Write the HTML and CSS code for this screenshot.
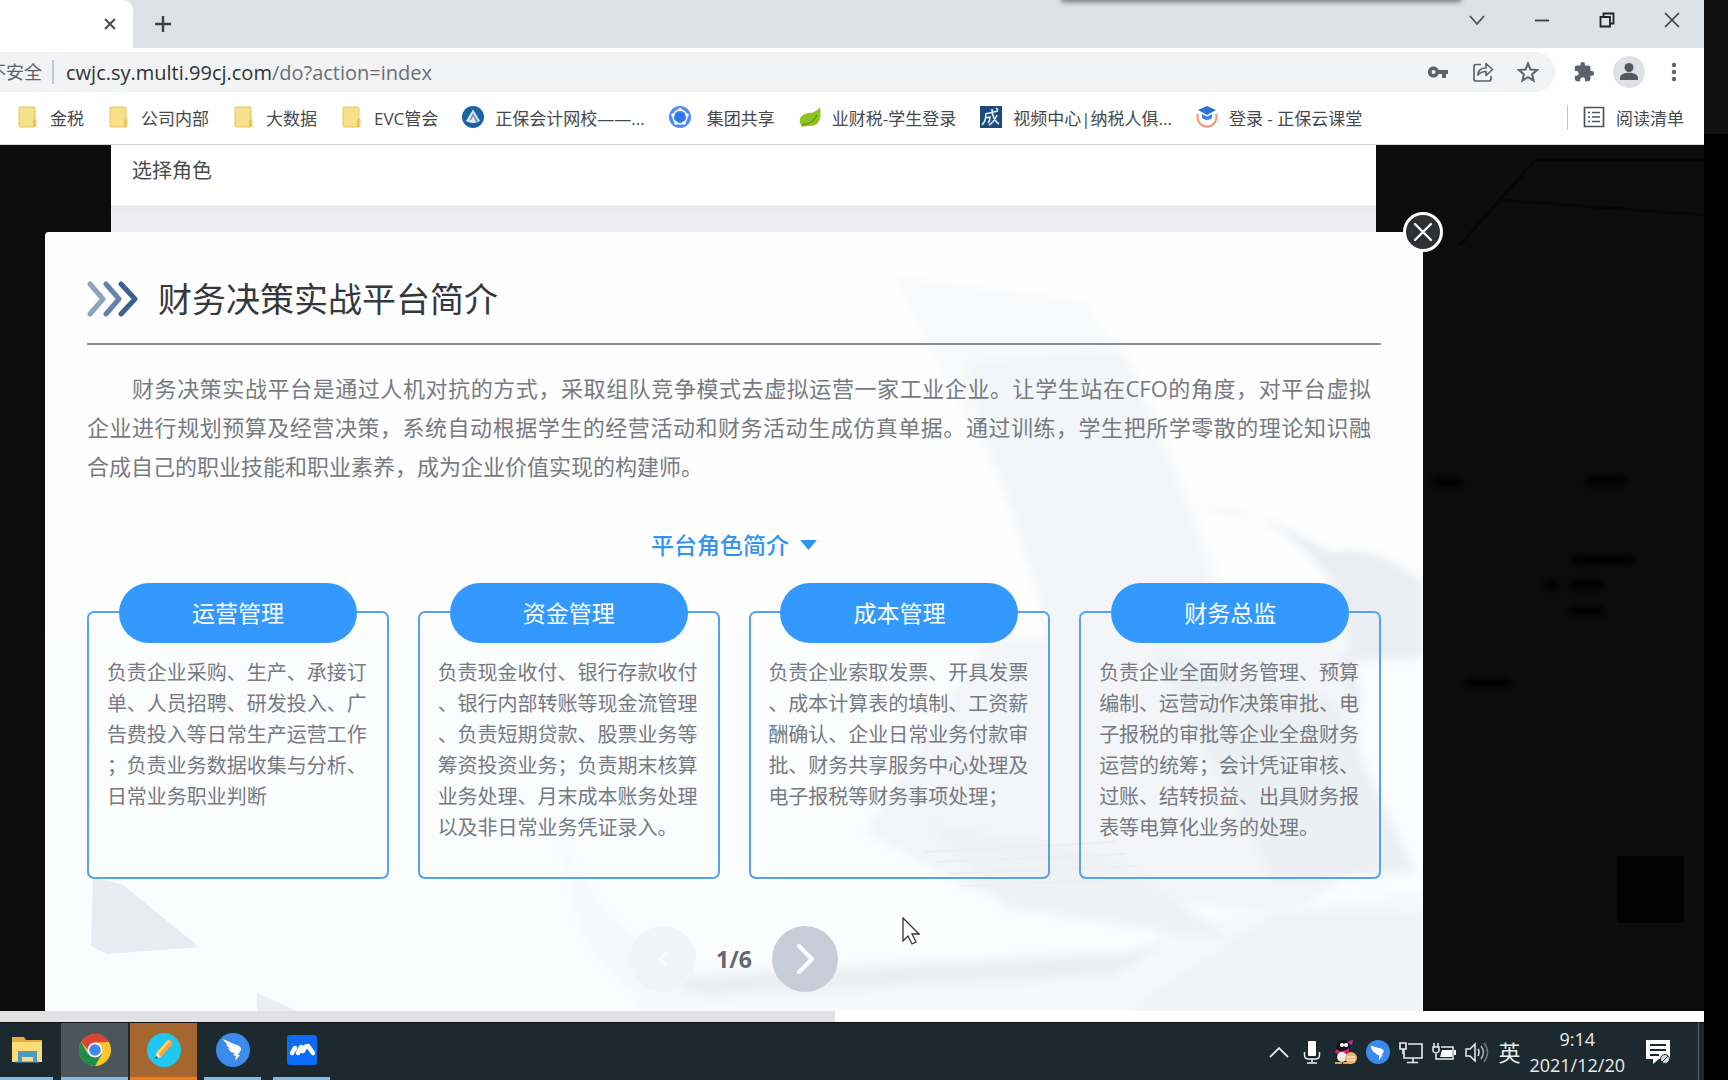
FILE: index.html
```html
<!DOCTYPE html>
<html lang="zh-CN">
<head>
<meta charset="utf-8">
<title>财务决策实战平台</title>
<link rel="stylesheet" href="styles.css">
</head>
<body>
<div class="desktop">
  <div class="browser">
    <header class="tabstrip">
      <div class="tab">
        <button class="icon-btn tab-close" aria-label="关闭标签页"><svg width="12" height="12" viewBox="0 0 12 12"><path d="M1 1l10 10M11 1L1 11" stroke="#45494d" stroke-width="2" fill="none"/></svg></button>
      </div>
      <button class="icon-btn new-tab" aria-label="新标签页"><svg width="18" height="18" viewBox="0 0 18 18"><path d="M9 1v16M1 9h16" stroke="#3c4043" stroke-width="2.400" fill="none"/></svg></button>
      <div class="window-controls">
        <button class="icon-btn" aria-label="搜索标签页"><svg width="16" height="16" viewBox="0 0 16 16"><path d="M1 4l7 8 7-8" stroke="#4a4d52" stroke-width="1.800" fill="none"/></svg></button>
        <button class="icon-btn" aria-label="最小化"><svg width="16" height="16" viewBox="0 0 16 16"><path d="M1 8.500h14" stroke="#3c4043" stroke-width="1.800"/></svg></button>
        <button class="icon-btn" aria-label="还原"><svg width="16" height="16" viewBox="0 0 16 16"><path d="M1.500 5h9.500v9.500H1.500zM4.500 5V1.500h10v10H11" stroke="#222" stroke-width="1.800" fill="none"/></svg></button>
        <button class="icon-btn" aria-label="关闭"><svg width="16" height="16" viewBox="0 0 16 16"><path d="M1 1l14 14M15 1L1 15" stroke="#3c4043" stroke-width="1.700"/></svg></button>
      </div>
    </header>

    <div class="toolbar">
      <div class="omnibox">
        <span class="security"><span>不安全</span></span>
        <label class="host" for="url">cwjc.sy.multi.99cj.com</label>
        <input class="path" id="url" type="text" value="/do?action=index">
        <button class="icon-btn" aria-label="密码"><svg width="22" height="22" viewBox="0 0 22 22"><path fill="#5f6368" fill-rule="evenodd" d="M6.500 5.500a5.500 5.500 0 0 1 5.100 3.500H21v4h-2v4h-4v-4h-3.400a5.500 5.500 0 1 1-5.100-7.500zm0 3.500a2 2 0 1 0 0 4 2 2 0 0 0 0-4z"/></svg></button>
        <button class="icon-btn" aria-label="分享"><svg width="22" height="22" viewBox="0 0 22 22" fill="none" stroke="#5f6368" stroke-width="1.700" stroke-linejoin="round"><path d="M9 3.500H4a2 2 0 0 0-2 2V18a2 2 0 0 0 2 2h13a2 2 0 0 0 2-2v-3"/><path d="M6 14c0-5 3-7 8-7V2.500l6.500 6L14 14.500v-4c-4 0-6 1-8 3.500z"/></svg></button>
        <button class="icon-btn" aria-label="收藏"><svg width="22" height="22" viewBox="0 0 22 22"><path d="M11 2.500l2.500 6 6.500.6-4.900 4.200 1.500 6.300L11 16.200l-5.600 3.400 1.500-6.300L2 9.100l6.500-.6z" fill="none" stroke="#5f6368" stroke-width="2"/></svg></button>
      </div>
      <button class="icon-btn" aria-label="扩展程序"><svg width="22" height="22" viewBox="0 0 24 24"><path fill="#5f6368" d="M20.500 11H19V7a2 2 0 0 0-2-2h-4V3.500a2.500 2.500 0 0 0-5 0V5H4a2 2 0 0 0-2 2v3.800h1.500a2.700 2.700 0 0 1 0 5.400H2V20a2 2 0 0 0 2 2h3.800v-1.500a2.700 2.700 0 0 1 5.400 0V22H17a2 2 0 0 0 2-2v-4h1.500a2.500 2.500 0 0 0 0-5z"/></svg></button>
      <button class="icon-btn" aria-label="用户"><svg width="32" height="32" viewBox="0 0 32 32"><circle cx="16" cy="16" r="16" fill="#dee1e8"/><circle cx="16" cy="11.500" r="4.500" fill="#54585f"/><path d="M7 24v-2c0-7 18-7 18 0v2z" fill="#54585f"/></svg></button>
      <button class="icon-btn menu" aria-label="更多"><svg width="6" height="20" viewBox="0 0 6 20" fill="#5f6368"><circle cx="3" cy="3" r="2.200"/><circle cx="3" cy="10" r="2.200"/><circle cx="3" cy="17" r="2.200"/></svg></button>
    </div>

    <nav class="bookmarks">
      <a class="bookmark" href="#"><svg class="ico" viewBox="0 0 22 22"><path d="M2 2q0-1 1-1h14q1 0 1 1v11l1 1v5q0 2-2 2H3q-1 0-1-1z" fill="#f6e08a" stroke="#e6c45c"/><path d="M16 14l2-1v8h-2z" fill="#e9bf57"/></svg><span>金税</span></a>
      <a class="bookmark" href="#"><svg class="ico" viewBox="0 0 22 22"><path d="M2 2q0-1 1-1h14q1 0 1 1v11l1 1v5q0 2-2 2H3q-1 0-1-1z" fill="#f6e08a" stroke="#e6c45c"/><path d="M16 14l2-1v8h-2z" fill="#e9bf57"/></svg><span>公司内部</span></a>
      <a class="bookmark" href="#"><svg class="ico" viewBox="0 0 22 22"><path d="M2 2q0-1 1-1h14q1 0 1 1v11l1 1v5q0 2-2 2H3q-1 0-1-1z" fill="#f6e08a" stroke="#e6c45c"/><path d="M16 14l2-1v8h-2z" fill="#e9bf57"/></svg><span>大数据</span></a>
      <a class="bookmark" href="#"><svg class="ico" viewBox="0 0 22 22"><path d="M2 2q0-1 1-1h14q1 0 1 1v11l1 1v5q0 2-2 2H3q-1 0-1-1z" fill="#f6e08a" stroke="#e6c45c"/><path d="M16 14l2-1v8h-2z" fill="#e9bf57"/></svg><span>EVC管会</span></a>
      <a class="bookmark" href="#"><svg class="ico" viewBox="0 0 22 22"><circle cx="11" cy="11" r="11" fill="#1b62a5"/><path d="M11 3.500L18 15q-7 4-14 0z" fill="#dfeaf4"/><path d="M11 7l-4 8 3-2 1-3 3 6 2-1z" fill="#6d97c4"/></svg><span>正保会计网校——...</span></a>
      <a class="bookmark roomy" href="#"><svg class="ico" viewBox="0 0 22 22"><circle cx="11" cy="11" r="11" fill="#4b8df0"/><circle cx="11" cy="11" r="7" fill="none" stroke="#fff" stroke-width="1.300"/><circle cx="11" cy="11" r="5" fill="#2f78ee"/><g fill="#fff"><circle cx="11" cy="3.500" r="1.800"/><circle cx="4" cy="9" r="1.800"/><circle cx="18" cy="9" r="1.800"/><circle cx="7" cy="17" r="1.800"/><circle cx="15" cy="17" r="1.800"/></g></svg><span>集团共享</span></a>
      <a class="bookmark" href="#"><svg class="ico" viewBox="0 0 22 22"><path d="M21 1c2 12-1 19-10 19-4 0-5 0-8 1C-2 13 2 8 10 7c5-.5 8-2 11-6z" fill="#8fc31f"/><path d="M3 19c7-1 12-3 15-10" stroke="#5e9b12" stroke-width="1.600" fill="none"/></svg><span>业财税-学生登录</span></a>
      <a class="bookmark" href="#"><svg class="ico" viewBox="0 0 22 22"><path d="M0 0h22v22H0z" fill="#1f4a7c"/><path d="M5 8l13-3M6 8q0 7-4 11M6 12l4-1q0 4-2 6M12 3q0 10 7 15M17 9q-3 7-8 10M16 2l2 2" stroke="#e5edf5" stroke-width="1.600" fill="none"/></svg><span>视频中心|纳税人俱...</span></a>
      <a class="bookmark" href="#"><svg class="ico" viewBox="0 0 22 22"><path d="M2 8a9.500 9.500 0 1 0 18 0" stroke="#f0997c" stroke-width="2.200" fill="none"/><path d="M11 0l9 4-9 5-9-5z" fill="#2f70d8"/><path d="M6 8l5 2.500L16 8v4q-5 4-10 0z" fill="#3f80e4"/></svg><span>登录 - 正保云课堂</span></a>
      <button class="reading-list"><svg width="22" height="22" viewBox="0 0 22 22" fill="none" stroke="#50545a" stroke-width="1.700"><path d="M1.500 1.500h19v19h-19z"/><path d="M5 6.500h2M9 6.500h8M5 11h2M9 11h8M5 15.500h2M9 15.500h8"/></svg><span>阅读清单</span></button>
    </nav>

    <main class="viewport">
      <svg class="backdrop" viewBox="0 0 1704 866" preserveAspectRatio="none" aria-hidden="true">
        <defs><filter id="dim"><feGaussianBlur stdDeviation="3"/></filter></defs>
        <path d="M1535 15L1460 100M1535 15H1704M1500 55L1704 70" stroke="#060607" stroke-width="3" fill="none"/>
        <rect x="1617" y="711" width="67" height="67" fill="#030303"/>
        <path filter="url(#dim)" d="M1570 415h66M1570 440h34M1570 466h34M1544 440h14M1466 538h44M1586 336h40M1432 337h30" stroke="#050505" stroke-width="9"/>
      </svg>
      <section class="role-page">
        <h2 class="role-title">选择角色</h2>
      </section>
      <section class="modal" role="dialog" aria-labelledby="intro-title">
        <svg class="modal-art" viewBox="0 0 1378 779" preserveAspectRatio="none" aria-hidden="true">
          <defs><filter id="soft" x="-10%" y="-10%" width="120%" height="120%"><feGaussianBlur stdDeviation="4"/></filter></defs>
          <rect x="0" y="400" width="1378" height="379" fill="#fafbfd" opacity=".7"/>
          <g filter="url(#soft)">
            <path d="M850 45L1040 70 1110 180 1170 330 1250 640 1020 400 950 240z" fill="#f8f9fb"/>
            <path d="M920 130L1080 120 1150 300 1190 470 1010 420z" fill="#f3f5f8"/>
            <path d="M1150 275q60 0 100 35 60 50 50 120l78-5v-75q-50-40-90-30l-60-30z" fill="#eaeef2"/>
            <path d="M1190 400q90-20 120 40 30 80-90 50z" fill="#e9edf2"/>
            <path d="M940 410L1290 400 1340 620 1250 680 930 660 820 600z" fill="#f3f5f8"/>
            <path d="M1110 420L1290 470 1370 640 1230 650z" fill="#eceff4"/>
            <path d="M510 600L560 680 640 760 1100 720 1120 690 1378 660V779H600L540 710z" fill="#f6f8fa"/>
            <path d="M880 590l180 30 130 90-230-35z" fill="#eff1f5"/>
            <path d="M1230 680h148v99h-300z" fill="#f1f3f7"/>
            <path d="M600 745l480-25 40-8-50 32-410 20z" fill="#eeeff4"/>
          </g>
          <path d="M48 645l30 8 76 62-92 7-16-8z" fill="#e8ebf1"/>
          <path d="M212 761l40 18h-40z" fill="#eceef4"/>
          <path d="M880 620l190-10M890 630l190-8M902 642l190-8M915 654l190-8" stroke="#eceef3" stroke-width="2"/>
        </svg>
        <button class="modal-close" aria-label="关闭弹窗"><svg width="20" height="20" viewBox="0 0 20 20"><path d="M2 2l16 16M18 2L2 18" stroke="#fff" stroke-width="2.200" stroke-linecap="round"/></svg></button>
        <header class="modal-head">
          <svg width="52" height="36" viewBox="0 0 52 36" fill="none" stroke-width="5" stroke-linecap="round" stroke-linejoin="round"><path d="M3 3l13 15L3 33" stroke="#8ba4c0"/><path d="M19 3l13 15-13 15" stroke="#6584ad"/><path d="M34 3l14 15-14 15" stroke="#3b618f"/></svg>
          <h1 id="intro-title">财务决策实战平台简介</h1>
        </header>
        <p class="intro">
          <span class="line first">财务决策实战平台是通过人机对抗的方式，采取组队竞争模式去虚拟运营一家工业企业。让学生站在CFO的角度，对平台虚拟</span>
          <span class="line">企业进行规划预算及经营决策，系统自动根据学生的经营活动和财务活动生成仿真单据。通过训练，学生把所学零散的理论知识融</span>
          <span class="line last">合成自己的职业技能和职业素养，成为企业价值实现的构建师。</span>
        </p>
        <button class="roles-toggle"><span>平台角色简介</span><svg width="17" height="10" viewBox="0 0 17 10"><path d="M0 0h17L8.500 10z" fill="#3393f0"/></svg></button>
        <div class="roles">
          <article class="role"><h3>运营管理</h3><p>负责企业采购、生产、承接订单、人员招聘、研发投入、广告费投入等日常生产运营工作；负责业务数据收集与分析、日常业务职业判断</p></article>
          <article class="role"><h3>资金管理</h3><p>负责现金收付、银行存款收付、银行内部转账等现金流管理、负责短期贷款、股票业务等筹资投资业务；负责期末核算业务处理、月末成本账务处理以及非日常业务凭证录入。</p></article>
          <article class="role"><h3>成本管理</h3><p>负责企业索取发票、开具发票、成本计算表的填制、工资薪酬确认、企业日常业务付款审批、财务共享服务中心处理及电子报税等财务事项处理；</p></article>
          <article class="role"><h3>财务总监</h3><p>负责企业全面财务管理、预算编制、运营动作决策审批、电子报税的审批等企业全盘财务运营的统筹；会计凭证审核、过账、结转损益、出具财务报表等电算化业务的处理。</p></article>
        </div>
        <div class="pager">
          <button class="page-btn prev" aria-label="上一页" disabled><svg width="20" height="32" viewBox="0 0 20 32"><path d="M14 9l-7 7 7 7" stroke="#fbfbfd" stroke-width="3" fill="none"/></svg></button>
          <span class="page-no">1/6</span>
          <button class="page-btn next" aria-label="下一页"><svg width="20" height="32" viewBox="0 0 20 32"><path d="M4 3l13 13L4 29" stroke="#fff" stroke-width="4" stroke-linecap="round" stroke-linejoin="round" fill="none"/></svg></button>
        </div>
      </section>
    </main>
    <div class="hscroll"><div class="thumb"></div></div>

    <footer class="taskbar">
      <div class="apps">
        <button class="app explorer" aria-label="文件资源管理器"><svg width="30" height="28" viewBox="0 0 30 28"><path d="M0 1h12l2 3h16v21H0z" fill="#e0b03a"/><path d="M0 6h30v20H0z" fill="#fbdc79"/><path d="M6 15h19v11h-4v-5H10v5H6z" fill="#4a9ac4"/><path d="M3 25h24v2H3z" fill="#4a9ac4" opacity=".5"/></svg></button>
        <button class="app active" aria-label="Chrome"><svg width="32" height="32" viewBox="0 0 32 32"><circle cx="16" cy="16" r="16" fill="#fbc72f"/><path d="M2.100 8A16 16 0 0 0 16 32l7-12-7-4-7 4z" fill="#1e8e4a"/><path d="M2.100 8A16 16 0 0 1 29.900 8L16 8.500 9 16z" fill="#db4437"/><circle cx="16" cy="16" r="7.500" fill="#fff"/><circle cx="16" cy="16" r="5.800" fill="#4285f4"/></svg></button>
        <button class="app alert" aria-label="画笔"><svg width="34" height="34" viewBox="0 0 34 34"><circle cx="17" cy="17" r="17" fill="#1ec8f0"/><path d="M8 26l2-7L21 7q3-1 5 3-1 2-2 3L14 24z" fill="#f6a63c"/><path d="M10 19L21 7l2 1-11 13z" fill="#fcd26e"/><path d="M8 26l2-7 4 5z" fill="#f5e3cb"/><path d="M8 26l1-3 2 2z" fill="#333"/></svg></button>
        <button class="app running" aria-label="钉钉"><svg width="34" height="34" viewBox="0 0 34 34"><circle cx="17" cy="17" r="17" fill="#3b8bea"/><path d="M7 6q8 4 14 6 5 2 4 5l-3 5h2l-5 6 1-5-3-1q1-1 2-2-5 0-7-5l4 1q-5-2-6-5l3 1Q8 9 7 6z" fill="#fff"/></svg></button>
        <button class="app running" aria-label="会议"><svg width="32" height="32" viewBox="0 0 32 32"><rect x="1" y="1" width="30" height="30" rx="3" fill="#0b6cf6"/><path d="M6 19l3-5M12 19l3-6M17 17l2-4 3-1 5 7" stroke="#fff" stroke-width="4.500" stroke-linecap="round" stroke-linejoin="round" fill="none"/></svg></button>
      </div>
      <div class="tray">
        <button class="icon-btn" aria-label="显示隐藏的图标"><svg width="24" height="24" viewBox="0 0 24 24"><path d="M3 17l9-9 9 9" stroke="#dfe4e6" stroke-width="1.800" fill="none"/></svg></button>
        <button class="icon-btn" aria-label="麦克风"><svg width="24" height="24" viewBox="0 0 24 24"><rect x="8" y="1" width="8" height="15" rx="1" fill="#fff"/><path d="M4.500 12v3q0 4 4 4h7q4 0 4-4v-3M12 19v4M7 23h10" stroke="#e8ecee" stroke-width="1.500" fill="none"/></svg></button>
        <button class="icon-btn" aria-label="QQ"><svg width="24" height="24" viewBox="0 0 24 24"><path d="M4 6q0-6 6-6t7 6v5l2 6-6 6H5l-2-6-1-5z" fill="#15131a"/><path d="M14 2l6-2-1 5z" fill="#d82a90"/><circle cx="9" cy="5" r="2" fill="#fff"/><circle cx="13" cy="5" r="2" fill="#fff"/><path d="M3 9q6 5 13-1v4q-6 4-14 1z" fill="#d81f80"/><ellipse cx="9" cy="17" rx="5" ry="5" fill="#f5eeee"/><path d="M2 22h7v2H2zM10 22h7v2h-7z" fill="#e9a52c"/><circle cx="18" cy="18" r="6" fill="#f0b06b"/><path d="M14 17h8M14 20h8" stroke="#fff" stroke-width="1"/></svg></button>
        <button class="icon-btn" aria-label="钉钉"><svg width="24" height="24" viewBox="0 0 34 34"><circle cx="17" cy="17" r="17" fill="#3b8bea"/><path d="M7 8q8 2 14 4 5 2 4 5l-3 4h2l-6 8 1-7-3-1-6-5q-3-4-3-8z" fill="#fff"/></svg></button>
        <button class="icon-btn" aria-label="网络"><svg width="24" height="24" viewBox="0 0 24 24" fill="none" stroke="#e8ecee" stroke-width="1.600"><path d="M9 4h14v14H5v-8M14 18v4M8 22.500h11"/><path d="M1 3h6v6H1zM4 9v5"/></svg></button>
        <button class="icon-btn" aria-label="电源"><svg width="24" height="24" viewBox="0 0 24 24"><path d="M2 3v4M6 3v4M1 7h6v4q-1 2-3 2t-3-2zM4 13v6h4M9 7h12v12H8" stroke="#e8ecee" stroke-width="1.500" fill="none"/><path d="M10 10h10v7H8zM22 10h2v5h-2z" fill="#fff"/></svg></button>
        <button class="icon-btn" aria-label="音量"><svg width="24" height="24" viewBox="0 0 24 24" fill="none" stroke="#e8ecee" stroke-width="1.500"><path d="M1 9h4l5-5v17l-5-5H1z"/><path d="M13 9q2 3 0 7"/><path d="M16 6q5 6 0 13" opacity=".7"/><path d="M19 3q7 9 0 19" opacity=".4"/></svg></button>
        <button class="ime">英</button>
        <div class="clock"><time>9:14</time><time>2021/12/20</time></div>
        <button class="icon-btn notice" aria-label="通知"><svg width="24" height="24" viewBox="0 0 24 24"><path d="M0 0h24v19H13l-6 5v-5H0z" fill="#fff"/><path d="M4 5h16M4 10h16M4 15h9" stroke="#1c2a2f" stroke-width="1.800"/><circle cx="19" cy="19" r="4.500" fill="#d7dcde" stroke="#1c2a2f"/><path d="M16 22l6-6" stroke="#1c2a2f"/></svg></button>
      </div>
    </footer>
  </div>
  <div class="side-strip"></div>
  <div class="top-bar-shadow"></div>
  <svg class="cursor" width="18" height="28" viewBox="0 0 18 28" aria-hidden="true"><path d="M1 1v23l5-5 4 8 4-2-4-8h7z" fill="#fff" stroke="#333" stroke-width="1.300"/></svg>
</div>
</body>
</html>
```

FILE: styles.css
```css
* { box-sizing: border-box; }

body {
  margin: 0;
  background: #000;
  font-family: "Open Sans", "Noto Sans CJK SC", sans-serif;
  color: #45484c;
}

button, input {
  font: inherit;
  color: inherit;
  border: 0;
  padding: 0;
  background: none;
}

a { color: inherit; text-decoration: none; }
h1, h2, h3, p { margin: 0; font-weight: 400; }
svg { display: block; flex: none; }

.desktop {
  position: relative;
  display: grid;
  grid-template-columns: minmax(0, 1fr) 24px;
  min-height: 100vh;
  overflow: hidden;
}

.side-strip { background: linear-gradient(#101010 134px, #000 134px); }

.browser {
  display: grid;
  grid-template-rows: 48px 48px 49px 1fr 12px 57px;
}

.icon-btn { display: flex; align-items: center; justify-content: center; }

/* Tab strip */
.tabstrip {
  display: flex;
  align-items: center;
  background: #dee1e6;
}

.tab {
  display: flex;
  align-items: center;
  justify-content: flex-end;
  width: 133px;
  height: 100%;
  padding-right: 17px;
  background: #fff;
  border-top-right-radius: 10px;
}

.new-tab { margin-left: 21px; }

.window-controls {
  display: flex;
  gap: 49px;
  margin-left: auto;
  padding: 0 24px 8px 0;
}

/* Address bar */
.toolbar {
  display: flex;
  align-items: center;
  gap: 18px;
  padding: 0 27px 0 0;
  background: #fff;
}

.omnibox {
  display: flex;
  flex: 1;
  align-items: center;
  gap: 23px;
  height: 40px;
  padding-right: 16px;
  background: #f1f3f4;
  border-radius: 0 20px 20px 0;
  font-size: 20px;
}

.security {
  display: flex;
  justify-content: flex-end;
  width: 54px;
  padding-right: 10px;
  overflow: hidden;
  border-right: 2px solid #c3c6ca;
  font-size: 18px;
  line-height: 24px;
  white-space: nowrap;
  color: #5f6368;
}

.host { margin-left: -11px; color: #2f3337; }
.path { flex: 1; min-width: 0; margin-left: -23px; color: #6b6f74; }
.menu { margin-left: 8px; }

/* Bookmarks */
.bookmarks {
  display: flex;
  align-items: center;
  gap: 24px;
  padding: 0 20px 6px 17px;
  background: #fff;
  border-bottom: 1px solid #d5d6d9;
  font-size: 17px;
  white-space: nowrap;
}

.bookmark { display: flex; align-items: center; gap: 11px; }
.bookmark.roomy { gap: 16px; }
.ico { width: 22px; height: 22px; }

.reading-list {
  display: flex;
  align-items: center;
  gap: 11px;
  margin-left: auto;
  padding-left: 15px;
  border-left: 1px solid #c3c6ca;
}

/* Page */
.viewport {
  display: grid;
  position: relative;
  min-height: 0;
  background: #0c0c0c;
}

.backdrop { position: absolute; width: 100%; height: 100%; }

.role-page, .modal { grid-area: 1 / 1; position: relative; }

.role-page {
  height: 87px;
  margin: 0 328px 0 111px;
  background: linear-gradient(#fff 60px, #e8e8eb 61px, #eeeef4 72px);
}

.role-title {
  padding: 10px 21px;
  font-size: 20px;
  line-height: 32px;
  color: #4a4a4a;
}

.modal {
  display: flex;
  flex-direction: column;
  margin: 87px 281px 0 45px;
  padding: 0 42px 18px;
  background: #fefefe;
  border-top-left-radius: 4px;
}

.modal-art {
  position: absolute;
  inset: 0;
  width: 100%;
  height: 100%;
}

.modal > :not(.modal-art, .modal-close) { position: relative; }

.modal-close {
  position: absolute;
  top: -20px;
  right: -20px;
  display: flex;
  align-items: center;
  justify-content: center;
  width: 40px;
  height: 40px;
  background: #2e3033;
  border: 3px solid #fff;
  border-radius: 50%;
}

.modal-head {
  display: flex;
  align-items: center;
  gap: 19px;
  height: 113px;
  padding-top: 22px;
  border-bottom: 2px solid #8b8f98;
}

.modal-head h1 { font-size: 34px; line-height: 48px; color: #35383d; }

.intro {
  padding-top: 24px;
  font-size: 22px;
  line-height: 39px;
  color: #777a81;
  text-spacing-trim: space-all;
}

.line {
  display: block;
  padding-right: 10px;
  text-align-last: justify;
  white-space: nowrap;
}

.line.first { padding-left: 45px; }
.line.last { text-align-last: left; }

.roles-toggle {
  display: flex;
  align-items: center;
  align-self: center;
  gap: 11px;
  margin-top: 43px;
  font-size: 23px;
  font-weight: 500;
  line-height: 32px;
  color: #3393f0;
}

.roles {
  display: grid;
  grid-template-columns: repeat(4, minmax(0, 1fr));
  gap: 29px;
  padding-top: 50px;
}

.role {
  display: flex;
  flex-direction: column;
  align-items: center;
  height: 268px;
  border: 2px solid #55a3ee;
  border-radius: 7px;
}

.role h3 {
  width: 80%;
  margin-top: -30px;
  background: #3399ff;
  border-radius: 30px;
  font-size: 23px;
  line-height: 60px;
  text-align: center;
  color: #fff;
}

.role p {
  width: 262px;
  margin-top: 14px;
  font-size: 20px;
  line-height: 31px;
  color: #777a81;
  line-break: anywhere;
  text-spacing-trim: space-all;
}

.pager {
  display: flex;
  align-items: center;
  align-self: center;
  gap: 18px;
  margin-top: 47px;
}

.page-btn {
  display: flex;
  align-items: center;
  justify-content: center;
  width: 66px;
  height: 66px;
  border-radius: 50%;
}

.page-btn.prev { background: #f2f4f7; }
.page-btn.next { background: #c8ccd7; }

.page-no {
  width: 40px;
  font-size: 23px;
  font-weight: 700;
  text-align: center;
  color: #66686e;
}

.hscroll { background: #fff; border-bottom: 1px solid #111; }
.thumb { width: 49%; height: 100%; background: #e2e2e4; }

/* Taskbar */
.taskbar {
  display: flex;
  justify-content: space-between;
  background: #1c2a2f;
}

.apps { display: flex; gap: 2px; }

.app {
  display: flex;
  align-items: center;
  justify-content: center;
  width: 67px;
  border-bottom: 3px solid #86b9e0;
}

.app.explorer { width: 53px; margin-right: 6px; }
.app.active { background: #4a565b; }
.app.alert { background: #a5672f; border-color: #f47b16; }
.app.running { width: 57px; margin: 0 5px; }

.tray {
  display: flex;
  align-items: center;
  gap: 9px;
  margin-right: 5px;
  padding-right: 28px;
  border-right: 1px solid #5c686c;
  color: #e8ecee;
}

.ime { font-size: 22px; line-height: 32px; }

.clock {
  display: flex;
  flex-direction: column;
  align-items: center;
  font-size: 18px;
  line-height: 26px;
}

.notice { margin-left: 12px; }

/* Edge of the meeting toolbar hanging over the tab strip */
.top-bar-shadow {
  position: absolute;
  top: -8px;
  left: 1063px;
  width: 396px;
  height: 8px;
  background: #999;
  box-shadow: 0 0 5px 2px #777;
}

.cursor { position: absolute; top: 917px; left: 902px; }
```
